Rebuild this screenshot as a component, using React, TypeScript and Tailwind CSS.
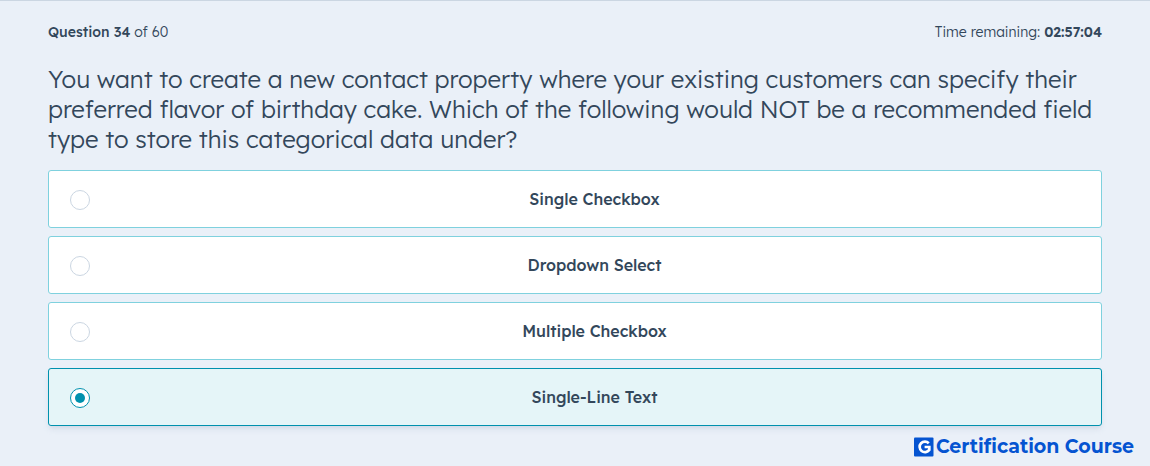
import { useState } from 'react';

const OPTIONS = ['Single Checkbox', 'Dropdown Select', 'Multiple Checkbox', 'Single-Line Text'];

interface AnswerOptionProps {
  label: string;
  checked: boolean;
  onSelect: () => void;
}

function AnswerOption({ label, checked, onSelect }: AnswerOptionProps) {
  return (
    <label
      className={`flex h-[58px] cursor-pointer items-center gap-[19px] rounded-[3px] border px-[21px] ${
        checked ? 'border-[#0091ae] bg-[#e5f5f8] shadow-md shadow-slate-400/20' : 'border-[#7fd1de] bg-white'
      }`}
    >
      <input
        type="radio"
        name="answer"
        checked={checked}
        onChange={onSelect}
        className="mt-px flex size-5 shrink-0 appearance-none items-center justify-center rounded-full border border-[#cbd6e2] bg-white checked:border-[#0091ae] checked:before:size-[10px] checked:before:rounded-full checked:before:bg-[#0091ae] checked:before:content-['']"
      />
      <span className="flex-1 text-center text-base font-medium">{label}</span>
    </label>
  );
}

function Brand() {
  return (
    <a href="#" className="flex items-center gap-[2px] text-[#0554d1]">
      <svg viewBox="0 0 20 20" className="size-5" aria-hidden="true">
        <rect y="0.5" width="19.5" height="19" rx="1" fill="#0554d1" />
        <path
          d="M14.8 6.2A5.3 5.3 0 1 0 15.3 12.9V10H10.6"
          fill="none"
          stroke="#fff"
          strokeWidth="2.7"
        />
      </svg>
      <span className="font-['Montserrat','Inter',sans-serif] text-[19px] leading-6 font-bold">
        Certification Course
      </span>
    </a>
  );
}

export default function App() {
  const [selected, setSelected] = useState(3);

  return (
    <main className="min-h-screen border-t border-[#cbd6e2] bg-[#eaf0f8] font-['Lexend','Inter',sans-serif] text-[#33475b]">
      <div className="px-12 pt-[19px]">
        <div className="flex justify-between text-sm leading-6 font-light">
          <p>
            <strong className="font-medium">Question 34</strong> of 60
          </p>
          <p>
            Time remaining: <strong className="font-semibold">02:57:04</strong>
          </p>
        </div>

        <fieldset className="pt-5">
          <legend className="contents">
            <h1 className="text-2xl leading-[30px] font-light">
              You want to create a new contact property where your existing customers can specify their
              preferred flavor of birthday cake. Which of the following would NOT be a recommended field
              type to store this categorical data under?
            </h1>
          </legend>
          <div className="flex flex-col gap-2 pt-4">
            {OPTIONS.map((option, index) => (
              <AnswerOption
                key={option}
                label={option}
                checked={selected === index}
                onSelect={() => setSelected(index)}
              />
            ))}
          </div>
        </fieldset>
      </div>

      <footer className="flex justify-end px-4 pt-[9px]">
        <Brand />
      </footer>
    </main>
  );
}
